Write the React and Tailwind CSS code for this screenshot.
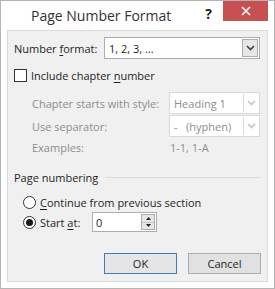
import { useState } from "react";

function Chevron({ color = "#404040" }) {
  return (
    <svg width="9" height="6" viewBox="0 0 9 6" fill="none">
      <path d="M1 1l3.5 3.5L8 1" stroke={color} strokeWidth="1.6" />
    </svg>
  );
}

function Combo({ value, disabled, width }) {
  return (
    <div
      className={`flex h-[22px] items-stretch border bg-white ${disabled ? "border-[#d9d9d9] text-[#8d8d8d]" : "border-[#abadb3] text-[#1e1e1e]"}`}
      style={{ width }}
    >
      <div className="flex flex-1 items-center whitespace-nowrap pl-[4px]">{value}</div>
      {disabled ? (
        <div className="m-[1px] flex w-[15px] items-center justify-center border-l border-[#d9d9d9]">
          <Chevron color="#c3c3c3" />
        </div>
      ) : (
        <div className="m-[1px] flex w-[16px] items-center justify-center border border-[#acacac] bg-[#e6e6e6]">
          <Chevron />
        </div>
      )}
    </div>
  );
}

function Radio({ checked }) {
  return (
    <div className="flex h-[13px] w-[13px] shrink-0 items-center justify-center rounded-full border border-[#333] bg-white">
      {checked && <div className="h-[7px] w-[7px] rounded-full bg-[#1a1a1a]" />}
    </div>
  );
}

export default function App() {
  const [start, setStart] = useState("0");

  return (
    <div
      className="flex h-[289px] w-[275px] flex-col overflow-hidden whitespace-nowrap border border-[#b4b4b4] bg-white text-[11px] leading-[15px] text-[#1e1e1e]"
      style={{ fontFamily: '"Open Sans", "Noto Sans", sans-serif' }}
    >
      {/* title bar */}
      <div className="flex h-[29px] shrink-0 items-start">
        <div className="pl-[30px] pt-[6px] text-[14px] leading-[18px] text-[#333]">Page Number Format</div>
        <div className="ml-auto pt-[5px] pr-[11px] text-[14px] font-bold leading-[16px] text-[#222]">?</div>
        <div className="mr-[6px] flex h-[20px] w-[45px] items-center justify-center bg-[#c75050]">
          <svg width="10" height="10" viewBox="0 0 10 10">
            <path d="M1 1l8 8M9 1l-8 8" stroke="#fff" strokeWidth="1.6" />
          </svg>
        </div>
      </div>

      {/* panel */}
      <div className="mx-[6px] flex h-[252px] shrink-0 flex-col border border-[#dadada] bg-[#f0f0f0] pl-[6px] pr-[6px] pt-[6px]">
        <div className="flex h-[22px] items-center">
          <div className="w-[90px]">
            Number <u className="underline-offset-2">f</u>ormat:
          </div>
          <Combo value="1, 2, 3, ..." width={156} />
        </div>

        <div className="mt-[9px] flex h-[15px] items-center">
          <div className="h-[13px] w-[13px] border border-[#333] bg-white" />
          <div className="ml-[4px]">
            Include chapter <u className="underline-offset-2">n</u>umber
          </div>
        </div>

        <div className="mt-[9px] flex h-[22px] items-center text-[#8d8d8d]">
          <div className="w-[155px] pl-[18px]">Chapter starts with style:</div>
          <Combo value="Heading 1" width={91} disabled />
        </div>

        <div className="mt-[1px] flex h-[22px] items-center text-[#8d8d8d]">
          <div className="w-[155px] pl-[18px]">Use separator:</div>
          <Combo value={<span>-&nbsp;&nbsp;&nbsp;(hyphen)</span>} width={91} disabled />
        </div>

        <div className="mt-[3px] flex h-[15px] items-center text-[#8d8d8d]">
          <div className="w-[155px] pl-[18px]">Examples:</div>
          <div className="pl-[1px]">1-1, 1-A</div>
        </div>

        <div className="mt-[15px] flex h-[15px] items-center">
          <div>Page numbering</div>
          <div className="ml-[8px] h-px flex-1 bg-[#dcdcdc]" />
        </div>

        <div className="mt-[10px] flex h-[15px] items-center pl-[9px]">
          <Radio />
          <div className="ml-[4px]">
            <u className="underline-offset-2">C</u>ontinue from previous section
          </div>
        </div>

        <div className="mt-[2px] flex h-[20px] items-center pl-[9px]">
          <Radio checked />
          <div className="ml-[4px] w-[52px]">
            Start <u className="underline-offset-2">a</u>t:
          </div>
          <div className="flex h-[20px] w-[65px] items-stretch border border-[#abadb3] bg-white">
            <input
              value={start}
              onChange={(e) => setStart(e.target.value)}
              className="w-0 flex-1 bg-transparent pl-[3px] text-[11px] outline-none"
            />
            <div className="m-[1px] flex w-[14px] flex-col border border-[#acacac] bg-[#e6e6e6]">
              <div className="flex flex-1 items-center justify-center border-b border-[#c8c8c8]">
                <svg width="5" height="3" viewBox="0 0 5 3"><path d="M0 3L2.5 0 5 3z" fill="#222" /></svg>
              </div>
              <div className="flex flex-1 items-center justify-center">
                <svg width="5" height="3" viewBox="0 0 5 3"><path d="M0 0h5L2.5 3z" fill="#222" /></svg>
              </div>
            </div>
          </div>
        </div>

        <div className="mt-[21px] flex justify-end gap-[11px]">
          <button className="h-[21px] w-[73px] border border-[#3c7fb1] bg-[#e5e5e5] text-[11px]">OK</button>
          <button className="h-[21px] w-[73px] border border-[#adadad] bg-[#e1e1e1] text-[11px]">Cancel</button>
        </div>
      </div>
    </div>
  );
}
